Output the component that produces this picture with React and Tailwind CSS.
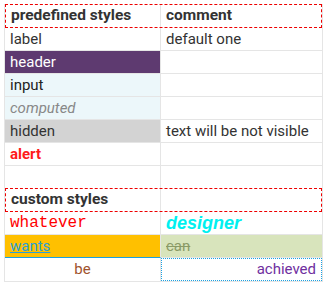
export default function App() {
  const cell = 'flex items-center px-[5px] overflow-hidden whitespace-nowrap';
  const row = 'flex h-[23px] border-b border-[#e5e5e5]';
  const c1 = 'w-[156px] shrink-0 border-r border-[#e5e5e5]';
  const c2 = 'flex-1';

  return (
    <div className="w-[327px] h-[286px] bg-white pt-[4px] pl-[4px] pr-[4px] text-[15px] text-[#333]" style={{ fontFamily: 'Roboto, "Liberation Sans", sans-serif' }}>
      <div className="w-[319px] border-r border-l border-[#e5e5e5]">
        {/* predefined header */}
        <div className="flex h-[24px] border border-dashed border-[#e00]">
          <div className={`${cell} w-[155px] shrink-0 border-r border-[#e5e5e5] font-bold text-[15.5px]`}>predefined styles</div>
          <div className={`${cell} flex-1 font-bold text-[15.5px]`}>comment</div>
        </div>

        <div className={row}>
          <div className={`${cell} ${c1}`}>label</div>
          <div className={`${cell} ${c2}`}>default one</div>
        </div>
        <div className={row}>
          <div className={`${cell} ${c1} bg-[#5e3a70] text-white`}>header</div>
          <div className={`${cell} ${c2}`}></div>
        </div>
        <div className={row}>
          <div className={`${cell} ${c1} bg-[#ecf7fa] text-[#222]`}>input</div>
          <div className={`${cell} ${c2}`}></div>
        </div>
        <div className={row}>
          <div className={`${cell} ${c1} bg-[#ecf7fa] text-[#888] italic`}>computed</div>
          <div className={`${cell} ${c2}`}></div>
        </div>
        <div className={row}>
          <div className={`${cell} ${c1} bg-[#d3d3d3]`}>hidden</div>
          <div className={`${cell} ${c2}`}>text will be not visible</div>
        </div>
        <div className={row}>
          <div className={`${cell} ${c1} text-[#ff1a1a] font-bold`}>alert</div>
          <div className={`${cell} ${c2}`}></div>
        </div>
        <div className="flex h-[22px]">
          <div className={`${cell} ${c1}`}></div>
          <div className={`${cell} ${c2}`}></div>
        </div>

        {/* custom header */}
        <div className="flex h-[24px] border border-dashed border-[#e00]">
          <div className={`${cell} w-[155px] shrink-0 border-r border-[#e5e5e5] font-bold text-[15.5px]`}>custom styles</div>
          <div className={`${cell} flex-1`}></div>
        </div>

        <div className={row}>
          <div className={`${cell} ${c1} text-[#ff0000] text-[16px]`} style={{ fontFamily: '"Liberation Mono", monospace' }}>whatever</div>
          <div className={`${cell} ${c2} text-[#00f0f0] text-[18px] font-bold italic`} style={{ fontFamily: '"Liberation Sans", sans-serif' }}>designer</div>
        </div>
        <div className="flex h-[23px]">
          <div className={`${cell} ${c1} bg-[#ffc000] text-[#2a9fd6] underline border-b border-b-[#1ba1e2]`}>wants</div>
          <div className={`${cell} ${c2} bg-[#d8e4bc] text-[#8a9a66] line-through border-b border-[#e5e5e5]`}>can</div>
        </div>
        <div className="flex h-[24px] border-b border-[#e5e5e5]">
          <div className={`${cell} ${c1} justify-center text-[#a0522d]`}>be</div>
          <div className={`${cell} ${c2} justify-end border border-dotted border-[#1ba1e2] text-[#7030a0]`}>achieved</div>
        </div>
      </div>
    </div>
  );
}
